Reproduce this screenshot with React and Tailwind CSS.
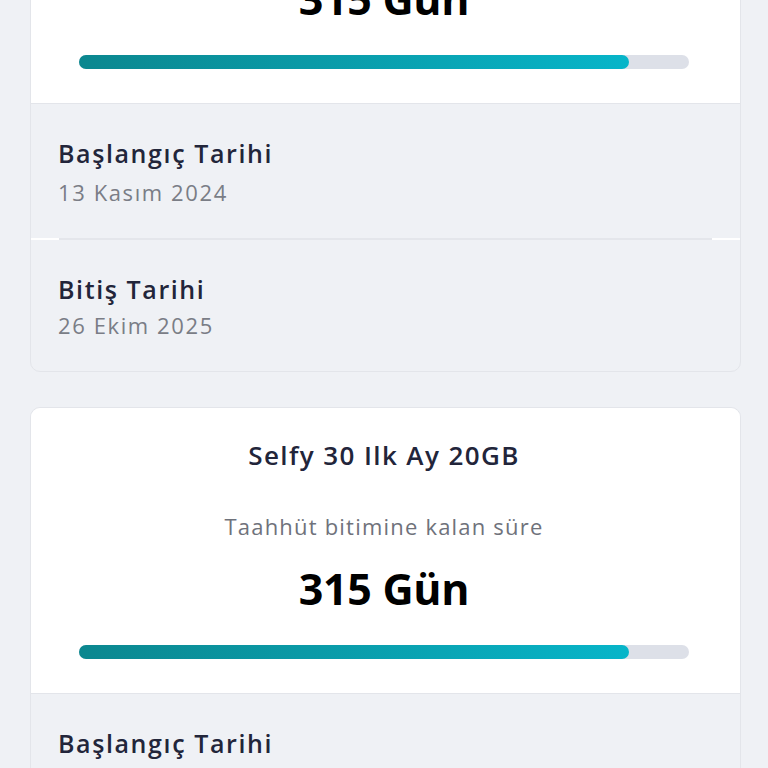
import React from 'react'

const plans = [
  { name: 'Selfy 30 Ilk Ay 20GB', days: 315, percent: 90, start: '13 Kasım 2024', end: '26 Ekim 2025' },
  { name: 'Selfy 30 Ilk Ay 20GB', days: 315, percent: 90, start: '13 Kasım 2024', end: '26 Ekim 2025' },
]

const PlanCard = ({ plan }) => {
  return (
    <div className="rounded-[10px] border border-[#e3e5ea] overflow-hidden bg-[#eff1f5]">
      <div className="bg-white pt-[30px] pb-[34px] pl-[48px] pr-[51px] flex flex-col items-center border-b border-[#e3e5ea]">
        <h3 className="text-[26px] leading-[34px] font-semibold tracking-[1.4px] text-[#22253a]">{plan.name}</h3>
        <p className="mt-[39px] text-[22px] leading-[30px] tracking-[1.2px] text-[#6f727b]">Taahhüt bitimine kalan süre</p>
        <p className="mt-[24px] text-[43px] leading-[48px] font-bold text-black tracking-[-0.3px]">
          {plan.days} Gün
        </p>
        <div className="mt-[32px] w-full h-[14px] rounded-full bg-[#dde0e8]">
          <div
            className="h-full rounded-full bg-gradient-to-r from-[#0b878f] to-[#07b5c9]"
            style={{ width: '90.2%' }}
          />
        </div>
      </div>

      <div className="px-[27px] pt-[33px] pb-[31px]">
        <p className="text-[25px] leading-[32px] font-semibold tracking-[1.6px] text-[#22253a]">Başlangıç Tarihi</p>
        <p className="mt-[8px] text-[22px] leading-[30px] tracking-[1.6px] text-[#7a7d86]">{plan.start}</p>
      </div>
      <div className="h-[2px] bg-white px-[28px]">
        <div className="h-[2px] bg-[#e4e6eb]" />
      </div>
      <div className="px-[27px] pt-[33px] pb-[31px]">
        <p className="text-[25px] leading-[32px] font-semibold tracking-[1.6px] text-[#22253a]">Bitiş Tarihi</p>
        <p className="mt-[5px] text-[22px] leading-[30px] tracking-[1.6px] text-[#7a7d86]">{plan.end}</p>
      </div>
    </div>
  )
}

export default function App() {
  return (
    <div className="h-[768px] overflow-hidden bg-[#eff1f5] font-['Open_Sans',sans-serif]">
      <div className="mt-[-183px] pl-[30px] pr-[27px] flex flex-col gap-[35px]">
        {plans.map((p, i) => (
          <PlanCard key={i} plan={p} />
        ))}
      </div>
    </div>
  )
}
